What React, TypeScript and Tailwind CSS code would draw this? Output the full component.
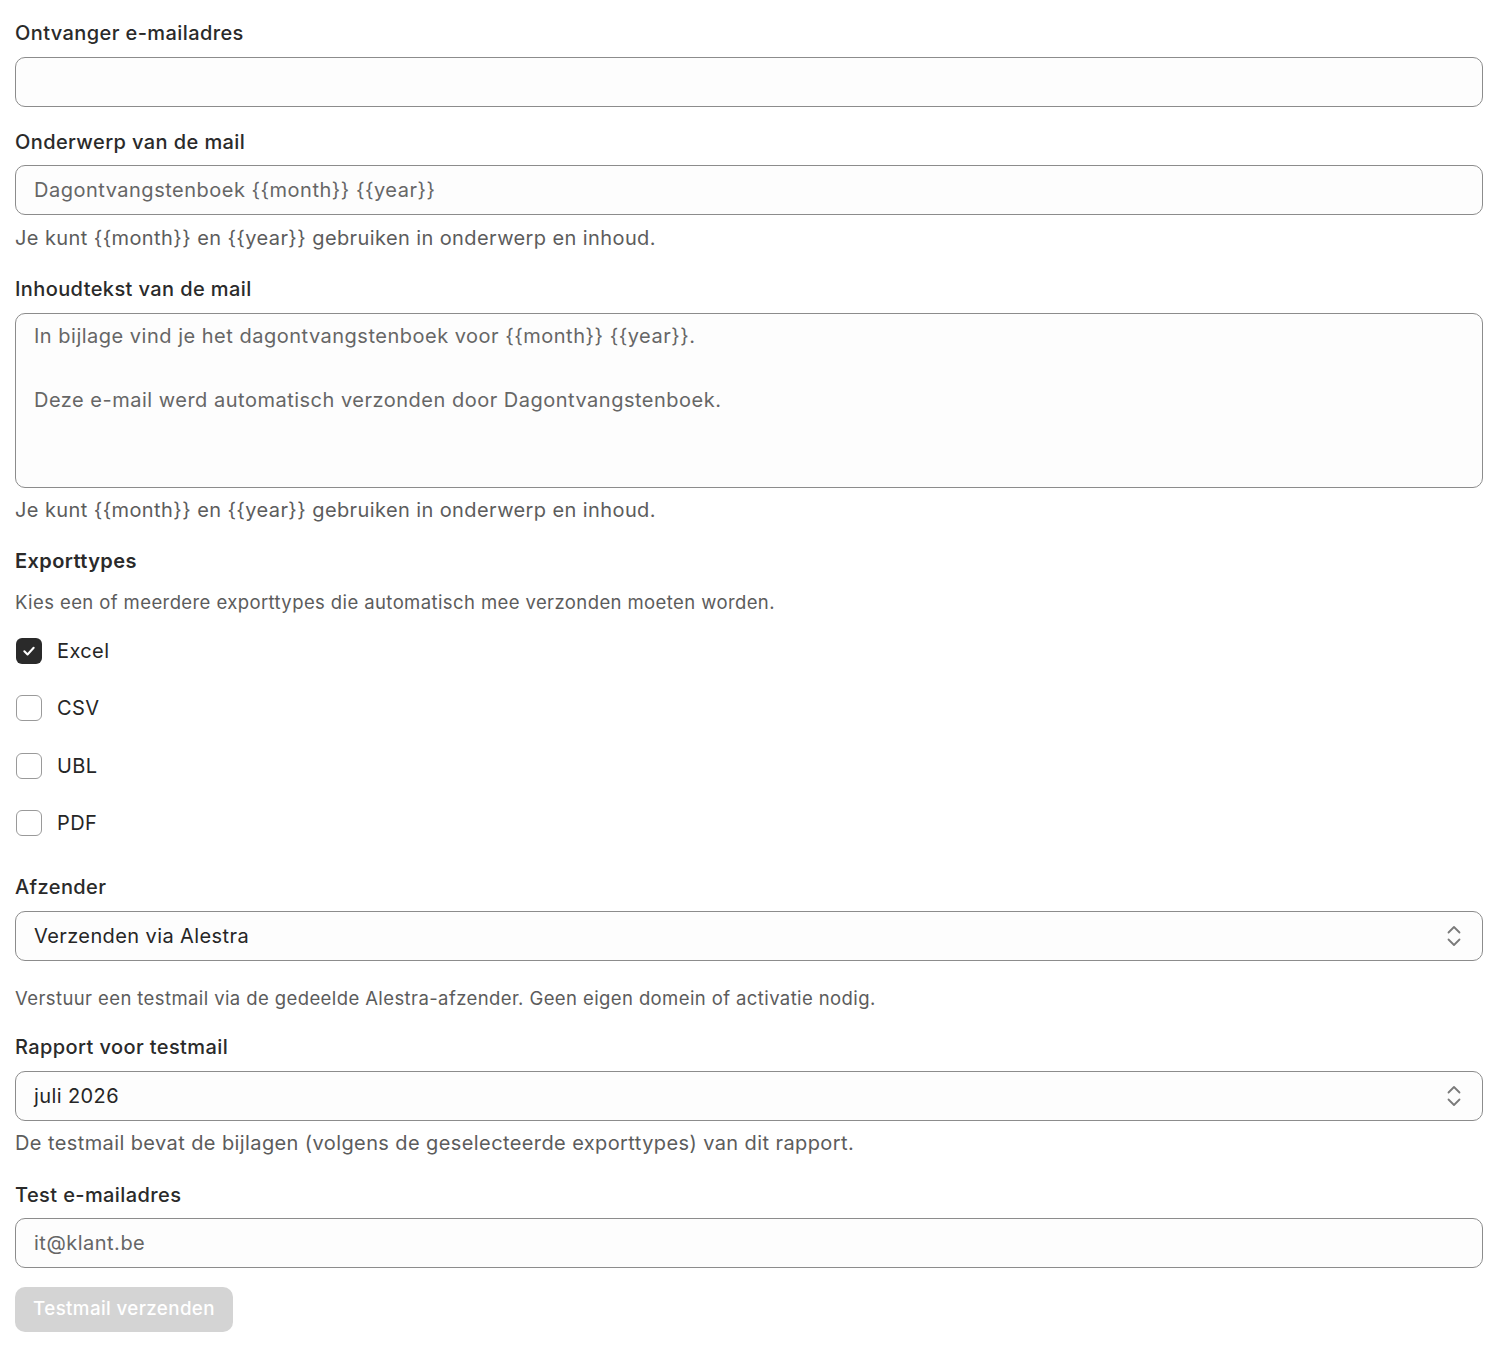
import React from "react";

const font = { fontFamily: "Inter, 'Noto Sans', sans-serif", letterSpacing: "0.025em" };

function Label({ children, className = "" }: { children: React.ReactNode; className?: string }) {
  return (
    <div className={`h-[30px] text-[20px] leading-[30px] font-medium tracking-[0.02em] text-[#2a2a2a] ${className}`}>
      {children}
    </div>
  );
}

function TextInput({ value, className = "" }: { value: string; className?: string }) {
  return (
    <input
      readOnly
      defaultValue={value}
      className={`block h-[50px] w-full rounded-[10px] border border-[#8c8c8c] bg-[#fdfdfd] px-[18px] text-[20px] text-[#666666] outline-none ${className}`}
      style={font}
    />
  );
}

function SelectBox({ value, className = "" }: { value: string; className?: string }) {
  return (
    <div
      className={`flex h-[50px] w-full items-center justify-between rounded-[10px] border border-[#8c8c8c] bg-[#fdfdfd] pl-[18px] pr-[21px] ${className}`}
    >
      <span className="text-[20px] text-[#262626]">{value}</span>
      <svg width="14" height="22" viewBox="0 0 14 22" fill="none" stroke="#7a7a7a" strokeWidth="1.8" strokeLinecap="round" strokeLinejoin="round">
        <polyline points="1.5,7.5 7,2 12.5,7.5" />
        <polyline points="1.5,14.5 7,20 12.5,14.5" />
      </svg>
    </div>
  );
}

function Help({ children, className = "" }: { children: React.ReactNode; className?: string }) {
  return <div className={`h-[30px] text-[20px] leading-[30px] text-[#5c5c5c] ${className}`}>{children}</div>;
}

function SmallHelp({ children, className = "" }: { children: React.ReactNode; className?: string }) {
  return <div className={`h-[25px] text-[18.5px] leading-[25px] text-[#5c5c5c] ${className}`}>{children}</div>;
}

function Check({ label, checked, className = "" }: { label: string; checked?: boolean; className?: string }) {
  return (
    <div className={`flex h-[30px] items-center gap-[15px] ${className}`}>
      {checked ? (
        <div className="ml-px flex h-[26px] w-[26px] items-center justify-center rounded-[6px] bg-[#2a2a2a]">
          <svg width="14" height="14" viewBox="0 0 24 24" fill="none" stroke="#ffffff" strokeWidth="3.5" strokeLinecap="round" strokeLinejoin="round">
            <polyline points="4,12.5 9.5,18 20,6.5" />
          </svg>
        </div>
      ) : (
        <div className="ml-px h-[26px] w-[26px] rounded-[6px] border border-[#9a9a9a] bg-white" />
      )}
      <span className="text-[20px] text-[#262626]">{label}</span>
    </div>
  );
}

export default function App() {
  return (
    <div className="min-h-[1350px] bg-white px-[15px] pt-[18px]" style={font}>
      <div className="flex flex-col">
        <Label>Ontvanger e-mailadres</Label>
        <TextInput value="" className="mt-[9px]" />

        <Label className="mt-[20px]">Onderwerp van de mail</Label>
        <TextInput value="Dagontvangstenboek {{month}} {{year}}" className="mt-[8px]" />
        <Help className="mt-[8px]">Je kunt {"{{month}}"} en {"{{year}}"} gebruiken in onderwerp en inhoud.</Help>

        <Label className="mt-[21px]">Inhoudtekst van de mail</Label>
        <textarea
          readOnly
          defaultValue={
            "In bijlage vind je het dagontvangstenboek voor {{month}} {{year}}.\n\nDeze e-mail werd automatisch verzonden door Dagontvangstenboek."
          }
          className="mt-[9px] block h-[175px] w-full resize-none rounded-[10px] border border-[#8c8c8c] bg-[#fdfdfd] px-[18px] pt-[6px] text-[20px] leading-[32px] text-[#666666] outline-none"
          style={font}
        />
        <Help className="mt-[7px]">Je kunt {"{{month}}"} en {"{{year}}"} gebruiken in onderwerp en inhoud.</Help>

        <Label className="mt-[21px] font-semibold">Exporttypes</Label>
        <SmallHelp className="mt-[14px]">Kies een of meerdere exporttypes die automatisch mee verzonden moeten worden.</SmallHelp>

        <Check label="Excel" checked className="mt-[21px]" />
        <Check label="CSV" className="mt-[27px]" />
        <Check label="UBL" className="mt-[28px]" />
        <Check label="PDF" className="mt-[27px]" />

        <Label className="mt-[34px]">Afzender</Label>
        <SelectBox value="Verzenden via Alestra" className="mt-[9px]" />
        <SmallHelp className="mt-[25px]">
          Verstuur een testmail via de gedeelde Alestra-afzender. Geen eigen domein of activatie nodig.
        </SmallHelp>

        <Label className="mt-[21px]">Rapport voor testmail</Label>
        <SelectBox value="juli 2026" className="mt-[9px]" />
        <Help className="mt-[7px]">
          De testmail bevat de bijlagen (volgens de geselecteerde exporttypes) van dit rapport.
        </Help>

        <Label className="mt-[22px]">Test e-mailadres</Label>
        <TextInput value="it@klant.be" className="mt-[8px]" />

        <div className="mt-[19px]">
          <button
            disabled
            className="h-[45px] w-[218px] rounded-[10px] bg-[#d4d4d4] text-[18.75px] font-medium tracking-[0.02em] text-white"
          >
            Testmail verzenden
          </button>
        </div>
      </div>
    </div>
  );
}
